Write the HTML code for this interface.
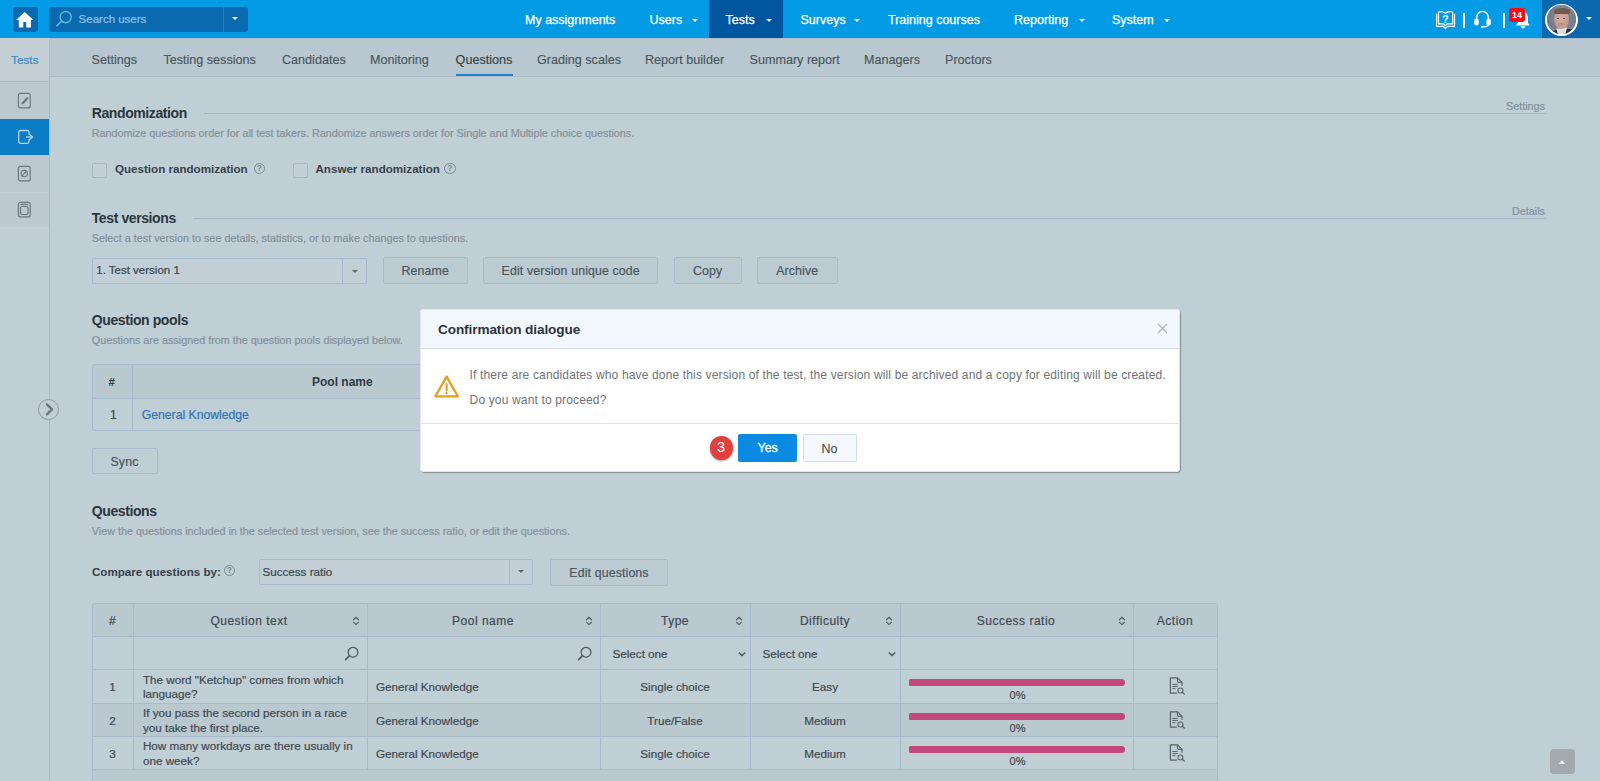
<!DOCTYPE html>
<html><head><meta charset="utf-8">
<style>
*{box-sizing:border-box;margin:0;padding:0}
html,body{width:1600px;height:781px;overflow:hidden;background:#C0CED5;font-family:"Liberation Sans",sans-serif;color:#2F3B42}
body div{-webkit-text-stroke-width:0.2px}
.h,.cl,.help{-webkit-text-stroke-width:0 !important}
.a{position:absolute;white-space:nowrap;line-height:1}
#nav{position:absolute;left:0;top:0;width:1600px;height:38px;background:#039BE5}
.nt{position:absolute;top:13.6px;font-size:12.5px;color:#fff;line-height:1;-webkit-text-stroke:0.25px #fff;white-space:nowrap}
.caret{position:absolute;width:0;height:0;border-left:3.4px solid transparent;border-right:3.4px solid transparent;border-top:3.8px solid #fff}
#sub{position:absolute;left:50px;top:38px;width:1550px;height:39px;background:#B9C8D0;border-top:1px solid #AFBEC6;border-bottom:1px solid #AEBDC5}
.st{position:absolute;top:15px;font-size:12.6px;color:#4A565C;line-height:1;white-space:nowrap;-webkit-text-stroke:0.15px #4A565C}
#side{position:absolute;left:0;top:38px;width:50px;height:743px;background:#C0CED5}
.h{position:absolute;font-size:14px;letter-spacing:-0.4px;font-weight:bold;color:#2C373D;line-height:1;white-space:nowrap}
.d{position:absolute;font-size:10.8px;color:#84919A;line-height:1;white-space:nowrap}
.hl{position:absolute;height:1px;background:#A6B8C8}
.btn{position:absolute;height:27px;background:#BCCAD2;border:1px solid #A9BACA;border-radius:2px;font-size:12.3px;color:#4A565C;text-align:center;line-height:27px;letter-spacing:0.15px}
.cb{position:absolute;width:15px;height:15px;border:1px solid #A9B7C0;border-radius:2px;background:#C3D0D6}
.cl{position:absolute;font-size:11.6px;font-weight:bold;color:#36424A;line-height:1;white-space:nowrap}
.help{position:absolute;width:11.5px;height:11.5px;border:1.2px solid #7D8B92;border-radius:50%;font-size:8.5px;color:#7D8B92;text-align:center;line-height:9.5px;font-weight:bold}
.th{position:absolute;top:614.8px;width:200px;text-align:center;font-size:12px;letter-spacing:0.5px;color:#3F4A50;line-height:1;white-space:nowrap}
.sort{position:absolute}
.td{position:absolute;font-size:11.7px;color:#3F4A50;line-height:1;white-space:nowrap}
.tdc{position:absolute;width:100px;text-align:center;font-size:11.7px;color:#3F4A50;line-height:1;white-space:nowrap}

</style></head><body>

<!-- top nav -->
<div id="nav">
  <div style="position:absolute;left:13px;top:7px;width:24.5px;height:24.5px;background:#0A6AB0;border-radius:3px"></div>
  <svg style="position:absolute;left:16px;top:11px" width="18" height="18" viewBox="0 0 18 18"><path d="M8.7 1.1 L17.4 8.9 L15 8.9 L15 16.4 L10.2 16.4 L10.2 11 L7.3 11 L7.3 16.4 L2.8 16.4 L2.8 8.9 L0.1 8.9 Z" fill="#fff"/></svg>
  <div style="position:absolute;left:49px;top:7px;width:199px;height:24.5px;background:#0A6AB0;border-radius:3px"></div>
  <div style="position:absolute;left:223px;top:7px;width:1px;height:24.5px;background:#2A80BE"></div>
  <div class="caret" style="left:232px;top:17px"></div>
  <svg style="position:absolute;left:55px;top:10px" width="18" height="18" viewBox="0 0 18 18"><circle cx="10.7" cy="7.1" r="5.6" fill="none" stroke="#5DB9DE" stroke-width="1.4"/><path d="M6.8 11 L1.9 15.8" stroke="#5DB9DE" stroke-width="1.6" stroke-linecap="round"/></svg>
  <div class="a" style="left:78.6px;top:14.2px;font-size:11.5px;color:#8FC3EA">Search users</div>

  <div class="nt" style="left:525px">My assignments</div>
  <div class="nt" style="left:649.5px">Users</div>
  <div class="caret" style="left:691.6px;top:18.6px"></div>
  <div style="position:absolute;left:709px;top:0;width:74px;height:38px;background:#0057A0"></div>
  <div class="nt" style="left:725.5px">Tests</div>
  <div class="caret" style="left:765.6px;top:18.6px"></div>
  <div class="nt" style="left:800.5px">Surveys</div>
  <div class="caret" style="left:853.6px;top:18.6px"></div>
  <div class="nt" style="left:888px">Training courses</div>
  <div class="nt" style="left:1014px">Reporting</div>
  <div class="caret" style="left:1078.6px;top:18.6px"></div>
  <div class="nt" style="left:1112px">System</div>
  <div class="caret" style="left:1163.6px;top:18.6px"></div>

  <!-- right icons -->
  <svg style="position:absolute;left:1435px;top:10px" width="21" height="20" viewBox="0 0 21 20"><path d="M1.6 3.8 L1.6 16.4 L8.2 16.4 L10.4 18.5 L12.6 16.4 L19.5 16.4 L19.5 3.8" fill="none" stroke="#fff" stroke-width="1.2" stroke-linejoin="round"/><path d="M3.5 13.8 L3.5 2 Q7.5 0.8 10.4 3.4 Q13.3 0.8 17.6 2 L17.6 13.8 L12.4 13.8 L10.4 15.6 L8.4 13.8 Z" fill="none" stroke="#fff" stroke-width="1.2" stroke-linejoin="round"/><text x="10.5" y="12.8" font-size="10.5" font-family="Liberation Sans" font-weight="bold" fill="#fff" text-anchor="middle">?</text></svg>
  <div style="position:absolute;left:1463px;top:13px;width:2px;height:14.5px;background:#fff"></div>
  <svg style="position:absolute;left:1473px;top:10px" width="19" height="19" viewBox="0 0 19 19"><path d="M3.6 10 L3.6 7.8 A5.9 6.4 0 0 1 15.4 7.8 L15.4 10" fill="none" stroke="#fff" stroke-width="1.4"/><rect x="1.2" y="8.6" width="4.6" height="7" rx="2.3" fill="#fff"/><rect x="13.4" y="8.6" width="4.4" height="7" rx="2.2" fill="#fff"/><path d="M15.5 14.5 Q15 16.8 9.5 17" fill="none" stroke="#fff" stroke-width="1.2"/><circle cx="9" cy="17" r="1.2" fill="#fff"/></svg>
  <div style="position:absolute;left:1503px;top:13px;width:2px;height:14.5px;background:#fff"></div>
  <svg style="position:absolute;left:1515px;top:10px" width="16" height="20" viewBox="0 0 16 20"><path d="M7.8 2 C4.2 2 2.8 5 2.8 8.5 L2.8 13 L1 15.6 L14.8 15.6 L13 13 L13 8.5 C13 5 11.5 2 7.8 2 Z" fill="#fff"/><path d="M5.6 16.2 A2.3 2.3 0 0 0 10.2 16.2 Z" fill="#fff"/></svg>
  <div style="position:absolute;left:1509.3px;top:7.5px;width:15.6px;height:14px;background:#FF0A14;border-radius:3px;color:#fff;font-size:9px;font-weight:bold;text-align:center;line-height:14px;letter-spacing:0;-webkit-text-stroke-width:0">14</div>
  <div style="position:absolute;left:1542px;top:0;width:58px;height:38px;background:#0A68AE"></div>
  <div style="position:absolute;left:1545px;top:3.6px;width:32.5px;height:32.3px;border-radius:50%;background:#fff"></div>
  <div style="position:absolute;left:1546.7px;top:5.2px;width:29px;height:29px;border-radius:50%;background:#7A8396;overflow:hidden">
   <div style="position:absolute;left:0;top:0;width:29px;height:29px;filter:blur(0.5px)">
    <div style="position:absolute;left:0;top:0;width:29px;height:29px;background:linear-gradient(90deg,#6F7889 0%,#818A9B 50%,#737C8D 100%)"></div>
    <div style="position:absolute;left:5px;top:24px;width:26px;height:10px;background:#262B33;border-radius:40% 40% 0 0"></div>
    <div style="position:absolute;left:9.5px;top:22px;width:11px;height:8px;background:#E2DEDD;clip-path:polygon(0 20%,100% 0,80% 100%,20% 100%)"></div>
    <div style="position:absolute;left:7.5px;top:5px;width:15px;height:19px;border-radius:44% 44% 50% 50%;background:radial-gradient(ellipse at 50% 45%,#D6B0A6 0%,#C59C92 60%,#A98276 100%)"></div>
    <div style="position:absolute;left:7px;top:2.5px;width:16px;height:6px;border-radius:50% 50% 20% 20%;background:#72594B"></div>
    <div style="position:absolute;left:10.2px;top:12.5px;width:2.6px;height:1.2px;background:#6A5650"></div>
    <div style="position:absolute;left:16.2px;top:12.5px;width:2.6px;height:1.2px;background:#6A5650"></div>
    <div style="position:absolute;left:11px;top:18px;width:7px;height:1.4px;background:#B88E86"></div>
   </div>
  </div>
  <div class="caret" style="left:1585.5px;top:16.5px;border-left-width:3.5px;border-right-width:3.5px;border-top-width:3.6px"></div>
</div>

<!-- sidebar -->
<div id="side">
  <div style="position:absolute;left:0;top:0;width:49px;height:44px;background:#C3CFD5;border-bottom:1px solid #A9B8CC"></div>
  <div class="a" style="left:11px;top:54.5px;font-size:11.8px;color:#3E88C6;position:absolute"></div>
</div>
<div class="a" style="left:11px;top:54.5px;font-size:11.8px;color:#3E88C6">Tests</div>
<div style="position:absolute;left:0;top:82px;width:49px;height:37px;background:#BCC9D0"></div>
<div style="position:absolute;left:0;top:119px;width:49px;height:36px;background:#0B7CC6"></div>
<div style="position:absolute;left:0;top:155px;width:49px;height:37px;background:#BCC9D0"></div>
<div style="position:absolute;left:0;top:192px;width:49px;height:36px;background:#BCC9D0;border-top:1px solid #C3CED4;border-bottom:1px solid #C3CED4"></div>
<!-- sidebar icons -->
<svg style="position:absolute;left:17px;top:92px" width="15" height="17" viewBox="0 0 15 17"><rect x="1.4" y="1.3" width="11.8" height="14.6" rx="2" fill="none" stroke="#6C777D" stroke-width="1.15"/><path d="M4.5 12.5 L5 10.5 L10 5 L11.5 6.5 L6.5 12 Z" fill="#6C777D"/></svg>
<svg style="position:absolute;left:12px;top:124px" width="26" height="26" viewBox="0 0 26 26"><path d="M17 10 L17 8.3 Q17 6.5 15.2 6.5 L8.5 6.5 Q6.7 6.5 6.7 8.3 L6.7 17.5 Q6.7 19.3 8.5 19.3 L15.2 19.3 Q17 19.3 17 17.5 L17 16 L20.6 13 L17 10 Z" fill="none" stroke="#B3D6EF" stroke-width="1.3" stroke-linejoin="round"/><path d="M14 13 L20 13" stroke="#B3D6EF" stroke-width="1.3"/></svg>
<svg style="position:absolute;left:17px;top:165px" width="15" height="17" viewBox="0 0 15 17"><rect x="1.4" y="1.3" width="11.8" height="14.6" rx="2" fill="none" stroke="#6C777D" stroke-width="1.15"/><circle cx="7.25" cy="8.5" r="3.2" fill="none" stroke="#6C777D" stroke-width="1.1"/><path d="M5 10.8 L9.5 6.2" stroke="#6C777D" stroke-width="1.1"/></svg>
<svg style="position:absolute;left:17px;top:201px" width="15" height="17" viewBox="0 0 15 17"><rect x="1.4" y="1.3" width="11.8" height="14.6" rx="2" fill="none" stroke="#6C777D" stroke-width="1.15"/><rect x="3.5" y="5.5" width="7.5" height="8" rx="1.5" fill="none" stroke="#6C777D" stroke-width="1.2"/><path d="M3.5 3.5 L11 3.5" stroke="#6C777D" stroke-width="1.2"/></svg>
<div style="position:absolute;left:49px;top:38px;width:1px;height:743px;background:#A8B9CC"></div>
<div style="position:absolute;left:0;top:38px;width:1600px;height:1px;background:#C9CDD1"></div>
<!-- expand arrow -->
<div style="position:absolute;left:38px;top:398.8px;width:20.8px;height:20.8px;border-radius:50%;border:1px solid #8E9AA0;background:#C0CED5"></div>
<svg style="position:absolute;left:40px;top:399px" width="20" height="20" viewBox="0 0 20 20"><path d="M6.9 5.4 L12 10.3 L6.9 15.4" fill="none" stroke="#6E7A80" stroke-width="2.4" stroke-linecap="round" stroke-linejoin="round"/></svg>

<!-- subnav -->
<div id="sub">
</div>
<div class="st" style="left:91.6px;top:53.5px">Settings</div>
<div class="st" style="left:163.4px;top:53.5px">Testing sessions</div>
<div class="st" style="left:282px;top:53.5px">Candidates</div>
<div class="st" style="left:370px;top:53.5px">Monitoring</div>
<div class="st" style="left:455.6px;top:53.5px;color:#2F3B42">Questions</div>
<div style="position:absolute;left:455.5px;top:74px;width:57px;height:2px;background:#1D82C8"></div>
<div class="st" style="left:537px;top:53.5px">Grading scales</div>
<div class="st" style="left:645px;top:53.5px">Report builder</div>
<div class="st" style="left:749.5px;top:53.5px">Summary report</div>
<div class="st" style="left:864px;top:53.5px">Managers</div>
<div class="st" style="left:945px;top:53.5px">Proctors</div>

<!-- Randomization -->
<div class="h" style="left:91.75px;top:105.6px">Randomization</div>
<div class="hl" style="left:204px;top:113px;width:1342px"></div>
<div class="d" style="left:1506px;top:101px;font-size:10.8px">Settings</div>
<div class="d" style="left:91.75px;top:127.9px">Randomize questions order for all test takers. Randomize answers order for Single and Multiple choice questions.</div>
<div class="cb" style="left:91.75px;top:162.5px"></div>
<div class="cl" style="left:115px;top:163.3px">Question randomization</div>
<div class="help" style="left:253.5px;top:162.5px">?</div>
<div class="cb" style="left:292.5px;top:162.5px"></div>
<div class="cl" style="left:315.5px;top:163.3px">Answer randomization</div>
<div class="help" style="left:444px;top:162.5px">?</div>

<!-- Test versions -->
<div class="h" style="left:91.75px;top:211.2px">Test versions</div>
<div class="hl" style="left:193px;top:218px;width:1353px"></div>
<div class="d" style="left:1512px;top:206px">Details</div>
<div class="d" style="left:91.75px;top:232.9px">Select a test version to see details, statistics, or to make changes to questions.</div>
<div style="position:absolute;left:91.75px;top:258px;width:275px;height:26px;border:1px solid #A9BACA;border-radius:2px;background:#C2CFD6"></div>
<div style="position:absolute;left:342px;top:259px;width:1px;height:24px;background:#A9BACA"></div>
<div class="caret" style="left:352px;top:269.5px;border-top-color:#5F6C73"></div>
<div class="a" style="left:96.25px;top:265.3px;font-size:11.5px;color:#3A464D">1. Test version 1</div>
<div class="btn" style="left:383px;top:257px;width:84.5px">Rename</div>
<div class="btn" style="left:483.4px;top:257px;width:174.6px">Edit version unique code</div>
<div class="btn" style="left:674px;top:257px;width:67.5px">Copy</div>
<div class="btn" style="left:757px;top:257px;width:80.5px">Archive</div>

<!-- Question pools -->
<div class="h" style="left:91.75px;top:313.4px">Question pools</div>
<div class="d" style="left:91.75px;top:334.9px">Questions are assigned from the question pools displayed below.</div>
<div style="position:absolute;left:91.6px;top:364px;width:340px;height:66.5px;border:1px solid #A9BACA;border-radius:3px;overflow:hidden">
  <div style="position:absolute;left:0;top:0;width:340px;height:34px;background:#BAC8D0;border-bottom:1px solid #A9BACA"></div>
  <div style="position:absolute;left:39.6px;top:0;width:1px;height:66px;background:#A9BACA"></div>
</div>
<div class="a" style="left:108.5px;top:377px;font-size:11.5px;font-weight:bold;-webkit-text-stroke-width:0">#</div>
<div class="a" style="left:312px;top:376px;font-size:12px;font-weight:bold;-webkit-text-stroke-width:0">Pool name</div>
<div class="a" style="left:110px;top:408.5px;font-size:12px;color:#3A464D">1</div>
<div class="a" style="left:141.8px;top:408.6px;font-size:12.2px;color:#2F73B6">General Knowledge</div>
<div class="btn" style="left:91.5px;top:447.5px;width:66px;height:26.5px;background:#BFCDD4">Sync</div>

<!-- Questions -->
<div class="h" style="left:91.75px;top:503.6px">Questions</div>
<div class="d" style="left:91.75px;top:525.5px">View the questions included in the selected test version, see the success ratio, or edit the questions.</div>
<div class="cl" style="left:92px;top:566px">Compare questions by:</div>
<div class="help" style="left:223.5px;top:564.5px">?</div>
<div style="position:absolute;left:258.5px;top:559px;width:274.5px;height:26px;border:1px solid #A9BACA;border-radius:2px;background:#C2CFD6"></div>
<div style="position:absolute;left:509px;top:560px;width:1px;height:24px;background:#A9BACA"></div>
<div class="caret" style="left:518px;top:570px;border-top-color:#5F6C73"></div>
<div class="a" style="left:262.6px;top:565.8px;font-size:11.6px;color:#3A464D">Success ratio</div>
<div class="btn" style="left:550px;top:558.5px;width:118px">Edit questions</div>

<!-- questions table -->
<div style="position:absolute;left:92px;top:603px;width:1126px;height:200px;border:1px solid #A9BACA;border-radius:3px;background:#C0CED5;overflow:hidden">
<div style="position:absolute;left:0;top:0;width:1124px;height:33px;background:#BAC8D0"></div>
<div style="position:absolute;left:0;top:99px;width:1124px;height:34px;background:#BAC8D0"></div>
<div style="position:absolute;left:0;top:166px;width:1124px;height:40px;background:#BAC8D0"></div>
<div style="position:absolute;left:0;top:32px;width:1124px;height:1px;background:#A9BACA"></div>
<div style="position:absolute;left:0;top:65px;width:1124px;height:1px;background:#A9BACA"></div>
<div style="position:absolute;left:0;top:99px;width:1124px;height:1px;background:#A9BACA"></div>
<div style="position:absolute;left:0;top:132px;width:1124px;height:1px;background:#A9BACA"></div>
<div style="position:absolute;left:0;top:165px;width:1124px;height:1px;background:#A9BACA"></div>
<div style="position:absolute;left:40px;top:0;width:1px;height:165px;background:#A9BACA"></div>
<div style="position:absolute;left:274px;top:0;width:1px;height:165px;background:#A9BACA"></div>
<div style="position:absolute;left:507px;top:0;width:1px;height:165px;background:#A9BACA"></div>
<div style="position:absolute;left:657px;top:0;width:1px;height:165px;background:#A9BACA"></div>
<div style="position:absolute;left:807px;top:0;width:1px;height:165px;background:#A9BACA"></div>
<div style="position:absolute;left:1040px;top:0;width:1px;height:165px;background:#A9BACA"></div>
</div>
<div class="th" style="left:12.5px">#</div>
<div class="th" style="left:149px">Question text</div>
<div class="th" style="left:383px">Pool name</div>
<div class="th" style="left:575px">Type</div>
<div class="th" style="left:725px">Difficulty</div>
<div class="th" style="left:916px">Success ratio</div>
<div class="th" style="left:1075px">Action</div>
<svg class="sort" style="left:351.5px;top:615px" width="8" height="11" viewBox="0 0 8 11"><path d="M1.2 5 L4 2.3 L6.8 5 M1.2 6.9 L4 9.6 L6.8 6.9" fill="none" stroke="#4A565C" stroke-width="1.1"/></svg>
<svg class="sort" style="left:585.0px;top:615px" width="8" height="11" viewBox="0 0 8 11"><path d="M1.2 5 L4 2.3 L6.8 5 M1.2 6.9 L4 9.6 L6.8 6.9" fill="none" stroke="#4A565C" stroke-width="1.1"/></svg>
<svg class="sort" style="left:735.0px;top:615px" width="8" height="11" viewBox="0 0 8 11"><path d="M1.2 5 L4 2.3 L6.8 5 M1.2 6.9 L4 9.6 L6.8 6.9" fill="none" stroke="#4A565C" stroke-width="1.1"/></svg>
<svg class="sort" style="left:885.0px;top:615px" width="8" height="11" viewBox="0 0 8 11"><path d="M1.2 5 L4 2.3 L6.8 5 M1.2 6.9 L4 9.6 L6.8 6.9" fill="none" stroke="#4A565C" stroke-width="1.1"/></svg>
<svg class="sort" style="left:1118.0px;top:615px" width="8" height="11" viewBox="0 0 8 11"><path d="M1.2 5 L4 2.3 L6.8 5 M1.2 6.9 L4 9.6 L6.8 6.9" fill="none" stroke="#4A565C" stroke-width="1.1"/></svg>
<svg style="position:absolute;left:343.5px;top:645px" width="16" height="16" viewBox="0 0 16 16"><circle cx="9" cy="7.2" r="4.9" fill="none" stroke="#4F5B61" stroke-width="1.3"/><path d="M5.6 10.6 L1.6 14.6" stroke="#4F5B61" stroke-width="1.6" stroke-linecap="round"/></svg>
<svg style="position:absolute;left:577.0px;top:645px" width="16" height="16" viewBox="0 0 16 16"><circle cx="9" cy="7.2" r="4.9" fill="none" stroke="#4F5B61" stroke-width="1.3"/><path d="M5.6 10.6 L1.6 14.6" stroke="#4F5B61" stroke-width="1.6" stroke-linecap="round"/></svg>
<div class="td" style="left:612.4px;top:648px">Select one</div>
<svg style="position:absolute;left:738.2px;top:650.5px" width="8" height="7" viewBox="0 0 8 7"><path d="M0.8 1.4 L4 4.6 L7.2 1.4" fill="none" stroke="#4A565C" stroke-width="1.35"/></svg>
<div class="td" style="left:762.4px;top:648px">Select one</div>
<svg style="position:absolute;left:888.2px;top:650.5px" width="8" height="7" viewBox="0 0 8 7"><path d="M0.8 1.4 L4 4.6 L7.2 1.4" fill="none" stroke="#4A565C" stroke-width="1.35"/></svg>
<div class="tdc" style="left:62.5px;top:681.0px">1</div>
<div class="td" style="left:142.9px;top:673.5px">The word "Ketchup" comes from which</div>
<div class="td" style="left:142.9px;top:688.0px">language?</div>
<div class="td" style="left:376px;top:681.0px">General Knowledge</div>
<div class="tdc" style="left:600px;width:150px;top:681.0px">Single choice</div>
<div class="tdc" style="left:750px;width:150px;top:681.0px">Easy</div>
<div style="position:absolute;left:909px;top:679.0px;width:216px;height:7px;border-radius:1.5px 3.5px 3.5px 1.5px;background:#C2477A"></div>
<div class="tdc" style="left:967.5px;width:100px;top:689.5px;font-size:11px">0%</div>
<svg style="position:absolute;left:1168px;top:676.0px" width="19" height="19" viewBox="0 0 19 19"><path d="M8.9 17.2 L2.4 17.2 L2.4 1.8 L9.5 1.8 L14.1 6.4 L14.1 9.8" fill="none" stroke="#59656B" stroke-width="1.2" stroke-linejoin="round"/><path d="M9.5 1.8 L9.5 5 Q9.5 6.4 11 6.4 L14.1 6.4" fill="none" stroke="#59656B" stroke-width="1.1"/><path d="M4.4 8.5 L9.7 8.5 M4.4 10.5 L9.7 10.5 M4.4 12.6 L7.4 12.6" stroke="#59656B" stroke-width="1"/><circle cx="12.4" cy="14.5" r="2.5" fill="none" stroke="#59656B" stroke-width="1.1"/><path d="M14.2 16.3 L16.3 18" stroke="#59656B" stroke-width="1.3" stroke-linecap="round"/></svg>
<div class="tdc" style="left:62.5px;top:714.5px">2</div>
<div class="td" style="left:142.9px;top:707px">If you pass the second person in a race</div>
<div class="td" style="left:142.9px;top:721.5px">you take the first place.</div>
<div class="td" style="left:376px;top:714.5px">General Knowledge</div>
<div class="tdc" style="left:600px;width:150px;top:714.5px">True/False</div>
<div class="tdc" style="left:750px;width:150px;top:714.5px">Medium</div>
<div style="position:absolute;left:909px;top:712.5px;width:216px;height:7px;border-radius:1.5px 3.5px 3.5px 1.5px;background:#C2477A"></div>
<div class="tdc" style="left:967.5px;width:100px;top:723.0px;font-size:11px">0%</div>
<svg style="position:absolute;left:1168px;top:709.5px" width="19" height="19" viewBox="0 0 19 19"><path d="M8.9 17.2 L2.4 17.2 L2.4 1.8 L9.5 1.8 L14.1 6.4 L14.1 9.8" fill="none" stroke="#59656B" stroke-width="1.2" stroke-linejoin="round"/><path d="M9.5 1.8 L9.5 5 Q9.5 6.4 11 6.4 L14.1 6.4" fill="none" stroke="#59656B" stroke-width="1.1"/><path d="M4.4 8.5 L9.7 8.5 M4.4 10.5 L9.7 10.5 M4.4 12.6 L7.4 12.6" stroke="#59656B" stroke-width="1"/><circle cx="12.4" cy="14.5" r="2.5" fill="none" stroke="#59656B" stroke-width="1.1"/><path d="M14.2 16.3 L16.3 18" stroke="#59656B" stroke-width="1.3" stroke-linecap="round"/></svg>
<div class="tdc" style="left:62.5px;top:747.8px">3</div>
<div class="td" style="left:142.9px;top:740.3px">How many workdays are there usually in</div>
<div class="td" style="left:142.9px;top:754.8px">one week?</div>
<div class="td" style="left:376px;top:747.8px">General Knowledge</div>
<div class="tdc" style="left:600px;width:150px;top:747.8px">Single choice</div>
<div class="tdc" style="left:750px;width:150px;top:747.8px">Medium</div>
<div style="position:absolute;left:909px;top:745.8px;width:216px;height:7px;border-radius:1.5px 3.5px 3.5px 1.5px;background:#C2477A"></div>
<div class="tdc" style="left:967.5px;width:100px;top:756.3px;font-size:11px">0%</div>
<svg style="position:absolute;left:1168px;top:742.8px" width="19" height="19" viewBox="0 0 19 19"><path d="M8.9 17.2 L2.4 17.2 L2.4 1.8 L9.5 1.8 L14.1 6.4 L14.1 9.8" fill="none" stroke="#59656B" stroke-width="1.2" stroke-linejoin="round"/><path d="M9.5 1.8 L9.5 5 Q9.5 6.4 11 6.4 L14.1 6.4" fill="none" stroke="#59656B" stroke-width="1.1"/><path d="M4.4 8.5 L9.7 8.5 M4.4 10.5 L9.7 10.5 M4.4 12.6 L7.4 12.6" stroke="#59656B" stroke-width="1"/><circle cx="12.4" cy="14.5" r="2.5" fill="none" stroke="#59656B" stroke-width="1.1"/><path d="M14.2 16.3 L16.3 18" stroke="#59656B" stroke-width="1.3" stroke-linecap="round"/></svg>

<!-- modal -->
<div style="position:absolute;left:420px;top:309px;width:760px;height:163px;background:#fff;border-radius:4px;box-shadow:1px 1px 1px rgba(80,95,105,0.55);overflow:hidden">
  <div style="position:absolute;left:0;top:0;width:760px;height:39px;background:#F3F7FE"></div>
  <div style="position:absolute;left:0;top:39px;width:760px;height:1px;background:#D6DEEE"></div>
  <div style="position:absolute;left:0;top:114px;width:760px;height:1px;background:#DAE2F0"></div>
  <div style="position:absolute;left:0;top:0;width:760px;height:163px;border:1px solid #E0E6F6;border-radius:4px"></div>
</div>
<div class="a" style="left:438px;top:322.7px;font-size:13.6px;letter-spacing:-0.1px;font-weight:bold;color:#2C3439;-webkit-text-stroke-width:0">Confirmation dialogue</div>
<svg style="position:absolute;left:1156px;top:321.5px" width="13" height="13" viewBox="0 0 13 13"><path d="M2 2 L11 11 M11 2 L2 11" stroke="#B3B8BD" stroke-width="1.35"/></svg>
<svg style="position:absolute;left:433px;top:374px" width="27" height="25" viewBox="0 0 27 25"><path d="M13.6 2.6 L24.8 22.3 L2.4 22.3 Z" fill="none" stroke="#E89D1E" stroke-width="2.3" stroke-linejoin="round"/><path d="M13.6 10 L13.6 16.6" stroke="#E89D1E" stroke-width="2.1" stroke-linecap="round"/><circle cx="13.6" cy="19.1" r="1.2" fill="#E89D1E"/></svg>
<div class="a" style="left:469.6px;top:368.6px;font-size:12px;letter-spacing:0.15px;color:#6E7378;-webkit-text-stroke-width:0">If there are candidates who have done this version of the test, the version will be archived and a copy for editing will be created.</div>
<div class="a" style="left:469.6px;top:393.5px;font-size:12px;letter-spacing:0.15px;color:#6E7378;-webkit-text-stroke-width:0">Do you want to proceed?</div>
<div style="position:absolute;left:709.5px;top:436.3px;width:23.3px;height:23.3px;border-radius:50%;background:#E2403F;box-shadow:0 1px 2px rgba(0,0,0,0.35);color:#fff;font-size:14.5px;text-align:center;line-height:22px;-webkit-text-stroke-width:0">3</div>
<div style="position:absolute;left:738.4px;top:434.2px;width:58.5px;height:27.5px;background:#0A8AE2;border-radius:2px;color:#fff;font-size:12.5px;text-align:center;line-height:29.5px;-webkit-text-stroke-width:0.3px">Yes</div>
<div style="position:absolute;left:802.5px;top:434.2px;width:54px;height:27.5px;background:#F5F8FC;border:1px solid #D3DBEC;border-radius:2px;color:#464C51;font-size:12.5px;text-align:center;line-height:28px;-webkit-text-stroke-width:0.1px">No</div>

<div style="position:absolute;left:1550px;top:749px;width:24.7px;height:24.9px;border-radius:4px;background:#A2AAAE"></div>
<svg style="position:absolute;left:1558px;top:759px" width="8" height="6" viewBox="0 0 8 6"><path d="M0.9 5 L4 1 L7.1 5 Z" fill="#F4F6F7"/></svg>
</body></html>
